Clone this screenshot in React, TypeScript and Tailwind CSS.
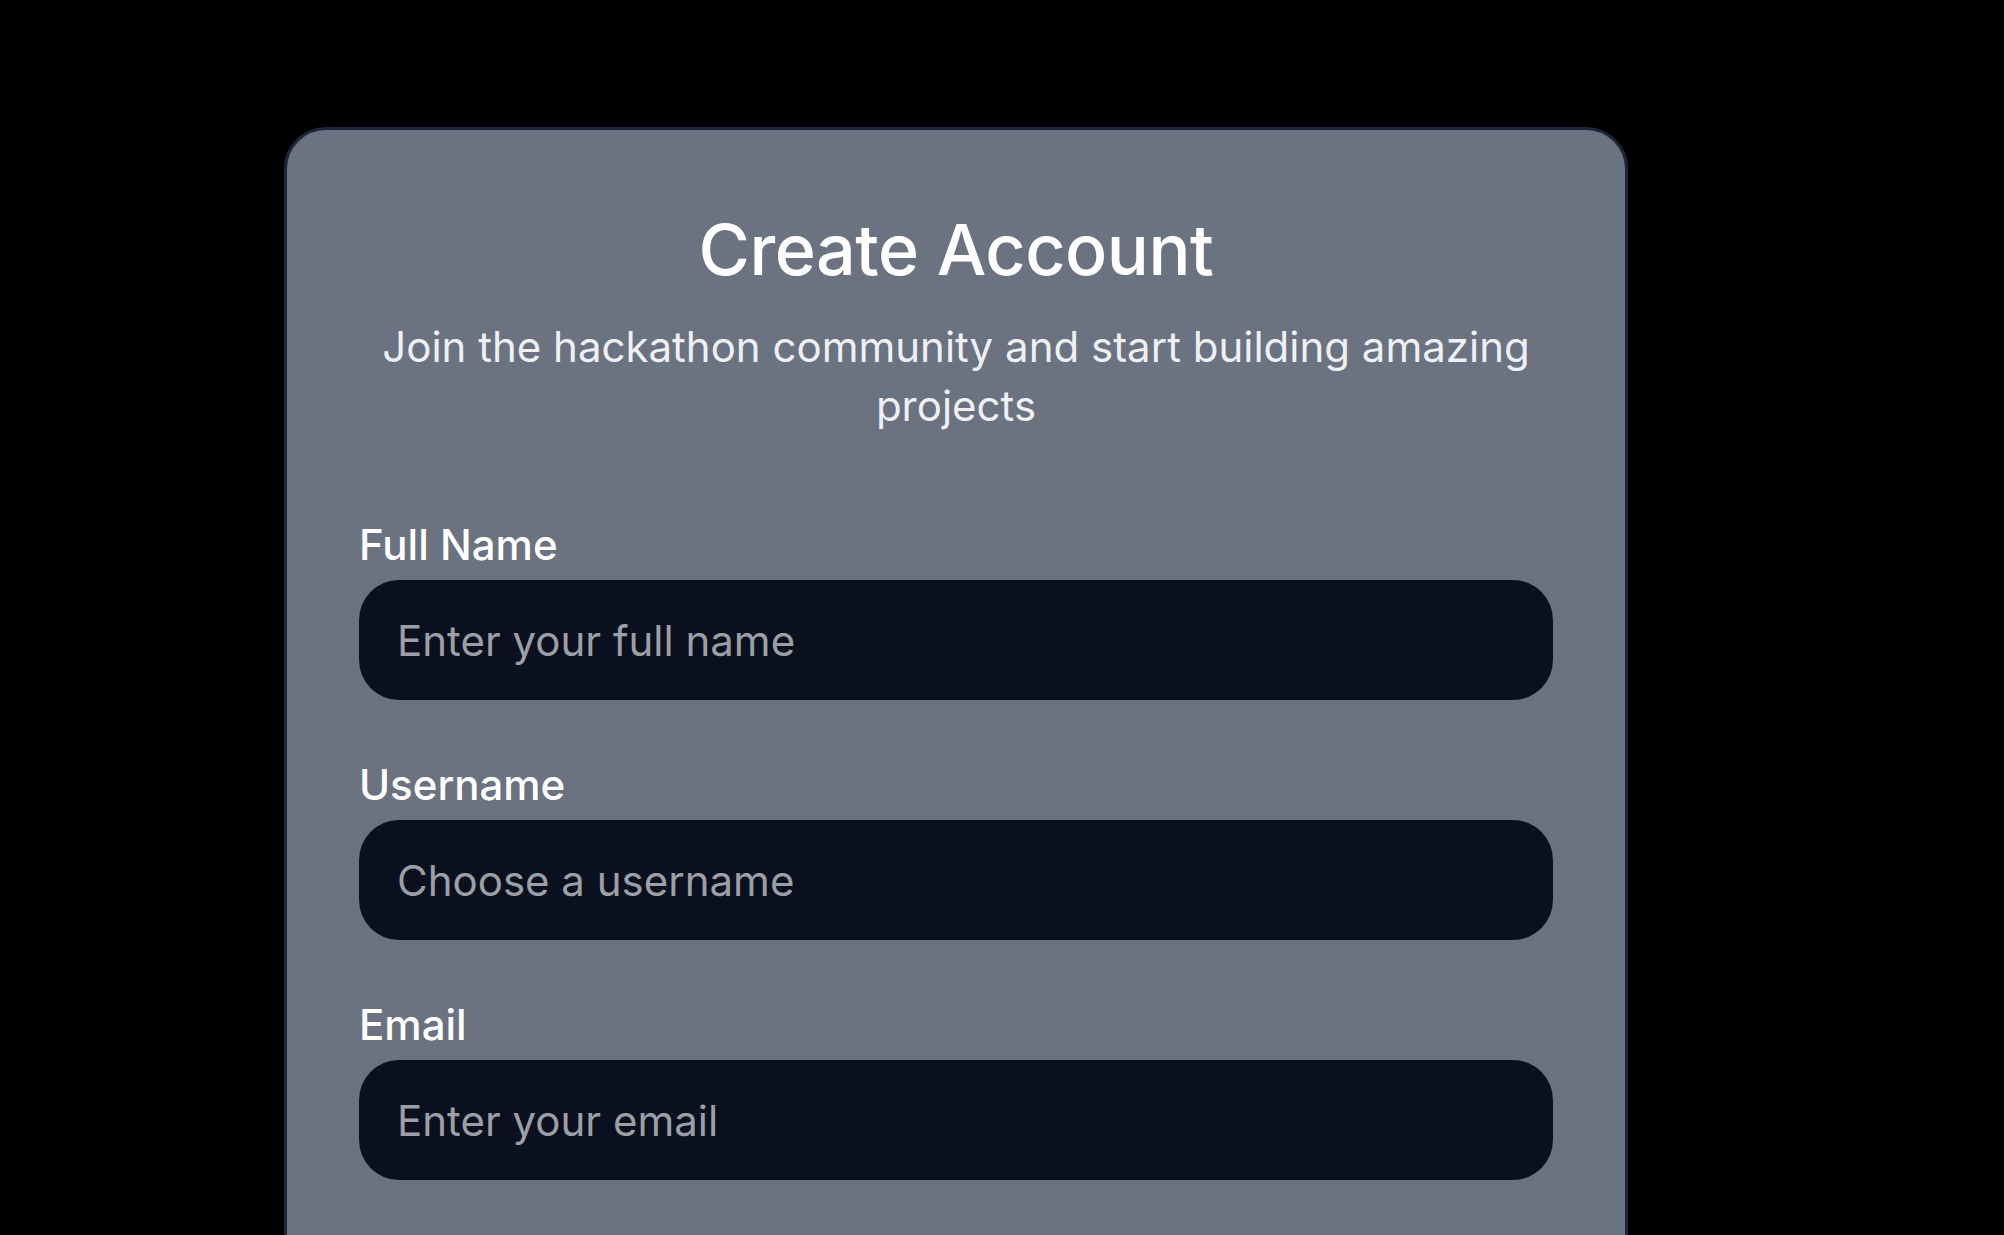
import { useState } from 'react';

const fields = [
  { id: 'fullName', label: 'Full Name', type: 'text', placeholder: 'Enter your full name' },
  { id: 'username', label: 'Username', type: 'text', placeholder: 'Choose a username' },
  { id: 'email', label: 'Email', type: 'email', placeholder: 'Enter your email' },
];

export default function App() {
  const [values, setValues] = useState<Record<string, string>>({});

  return (
    <div className="h-screen overflow-hidden bg-black font-['Inter','Noto_Sans',sans-serif]">
      <div className="pl-[284px] pt-[127px]">
        {/* Card */}
        <div className="w-[1344px] rounded-[42px] border-[3px] border-[#1e263a] bg-[#6b7280] px-[72px] pt-[80px] pb-[96px]">
          <h1 className="text-center text-[70px] leading-[80px] font-medium tracking-[-0.5px] text-white">
            Create Account
          </h1>
          <p className="mt-[27px] text-center text-[42px] leading-[59px] text-[#eef0f4]">
            Join the hackathon community and start building amazing projects
          </p>

          <form className="mt-[82px] flex flex-col gap-[57px]" onSubmit={(e) => e.preventDefault()}>
            {fields.map((field) => (
              <div key={field.id} className="flex flex-col">
                <label
                  htmlFor={field.id}
                  className="mb-[7px] text-[42px] leading-[56px] font-medium text-white"
                >
                  {field.label}
                </label>
                <input
                  id={field.id}
                  type={field.type}
                  value={values[field.id] || ''}
                  onChange={(e) => setValues({ ...values, [field.id]: e.target.value })}
                  placeholder={field.placeholder}
                  className="h-[120px] w-full rounded-[40px] bg-[#0b101e] px-[38px] text-[42px] text-white placeholder:text-[#9ca0a6] outline-none"
                />
              </div>
            ))}
          </form>
        </div>
      </div>
    </div>
  );
}
